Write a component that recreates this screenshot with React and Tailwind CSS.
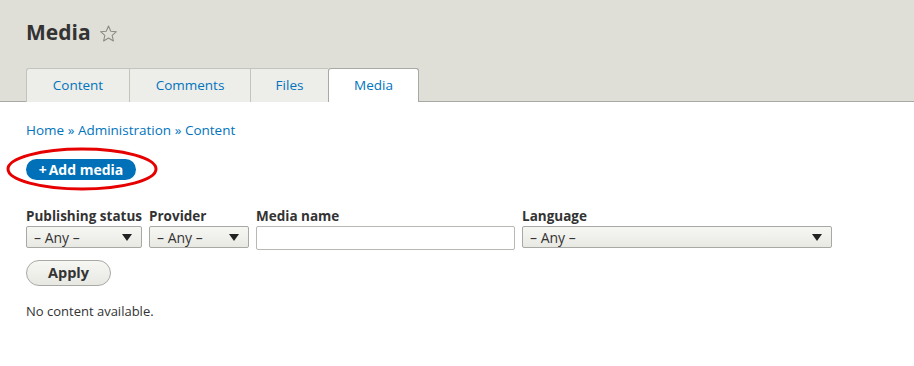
import { useState } from 'react';

// ---------- Tabs + filter data ----------
const tabs = [
  { title: 'Content', width: 'w-[103px]' },
  { title: 'Comments', width: 'w-[121px]' },
  { title: 'Files', width: 'w-[78px]' },
  { title: 'Media', width: 'w-[91px]' }
];

const filters = [
  { label: 'Publishing status', type: 'select', width: 'w-[116px]' },
  { label: 'Provider', type: 'select', width: 'w-[100px]' },
  { label: 'Media name', type: 'text', width: 'w-[259px]' },
  { label: 'Language', type: 'select', width: 'w-[310px]' }
];

function Star() {
  return (
    <svg width="19" height="19" viewBox="0 0 24 24" className="ml-[8px] mt-[2px]">
      <path
        d="M12 2.5l2.9 6.6 7.1.6-5.4 4.7 1.6 7-6.2-3.7-6.2 3.7 1.6-7L2 9.7l7.1-.6z"
        fill="none"
        stroke="#8a8a80"
        strokeWidth="1.3"
        strokeLinejoin="round"
      />
    </svg>
  );
}

function FakeSelect({ width }) {
  return (
    <div
      className={`${width} h-[22px] flex items-center justify-between pl-[7px] pr-[9px] rounded-[2px] border border-[#a8a8a4] bg-gradient-to-b from-[#f6f6f3] to-[#e9e9e4] text-[14px] text-[#333]`}
    >
      <span>– Any –</span>
      <svg width="10" height="7" viewBox="0 0 10 7">
        <path d="M0 0h10L5 7z" fill="#222" />
      </svg>
    </div>
  );
}

export default function App() {
  const [active, setActive] = useState('Media');
  const [name, setName] = useState('');

  return (
    <div className="w-[914px] h-[366px] bg-white text-[#333] font-['Open_Sans',sans-serif]">
      {/* ---------- Header ---------- */}
      <header className="bg-[#e0dfd7] border-b border-[#a8a8a4] pt-[19px] px-[26px]">
        <div className="flex items-center h-[26px]">
          <h1 className="text-[21px] font-bold text-[#333] leading-none">Media</h1>
          <Star />
        </div>
        <nav className="flex mt-[23px] -mb-px">
          {tabs.map(t => (
            <button
              key={t.title}
              onClick={() => setActive(t.title)}
              className={
                t.title === active
                  ? `${t.width} h-[34px] bg-white text-[#0074bd] text-[13.5px] border border-b-0 border-[#a8a8a4] rounded-t-[3px]`
                  : `${t.width} h-[34px] bg-[#ededea] text-[#0074bd] text-[13.5px] border border-r-0 border-b-0 border-[#c4c4bf] first:rounded-tl-[3px] hover:bg-white`
              }
            >
              {t.title}
            </button>
          ))}
        </nav>
      </header>

      {/* ---------- Content ---------- */}
      <main className="px-[26px] pt-[18px]">
        <div className="text-[13.5px] text-[#0074bd]">
          <a href="#">Home</a> » <a href="#">Administration</a> » <a href="#">Content</a>
        </div>

        <div className="relative mt-[19px] w-fit">
          <button className="h-[21px] w-[110px] rounded-full bg-[#0071b8] text-white text-[14px] font-bold leading-none flex items-center justify-center">
            +<span className="ml-[2px]">Add media</span>
          </button>
          {/* red annotation ring */}
          <svg
            width="154"
            height="46"
            viewBox="0 0 154 46"
            className="absolute left-[-21px] top-[-13px] pointer-events-none"
          >
            <ellipse cx="77" cy="23" rx="74" ry="20" fill="none" stroke="#e60000" strokeWidth="3" />
          </svg>
        </div>

        <div className="flex gap-[7px] mt-[27px]">
          {filters.map(f => (
            <div key={f.label} className="flex flex-col">
              <label className="text-[13.5px] font-bold text-[#333] leading-[18px] mb-[1px]">{f.label}</label>
              {f.type === 'select' ? (
                <FakeSelect width={f.width} />
              ) : (
                <input
                  value={name}
                  onChange={e => setName(e.target.value)}
                  className={`${f.width} h-[24px] px-[6px] rounded-[2px] border border-[#b8b8b4] bg-white text-[14px] outline-none`}
                />
              )}
            </div>
          ))}
        </div>

        <button className="mt-[10px] w-[85px] h-[26px] rounded-full border border-[#a8a8a4] bg-gradient-to-b from-[#f6f6f3] to-[#e8e8e3] text-[14.5px] font-bold text-[#333]">
          Apply
        </button>

        <p className="mt-[16px] text-[13px] text-[#333]">No content available.</p>
      </main>
    </div>
  );
}
